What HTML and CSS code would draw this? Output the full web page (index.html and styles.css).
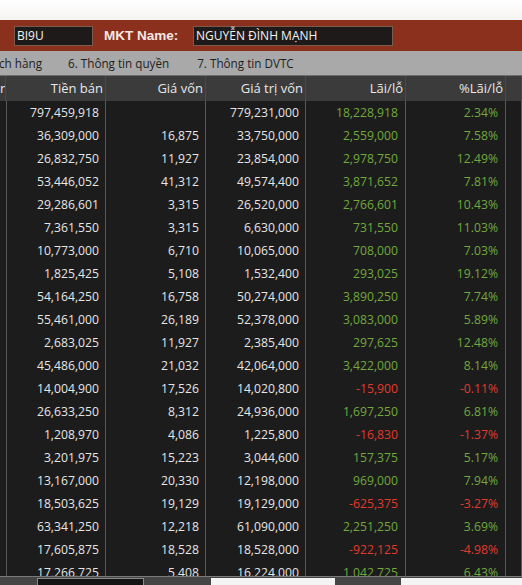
FILE: index.html
```html
<!DOCTYPE html>
<html lang="vi">
<head>
<meta charset="utf-8">
<title>Danh mục</title>
<link rel="stylesheet" href="styles.css">
</head>
<body>
<div class="top-space"></div>
<div class="info-bar">
  <div class="field field-code">BI9U</div>
  <div class="label">MKT Name:</div>
  <div class="field field-name">NGUYỄN ĐÌNH MẠNH</div>
</div>
<div class="tabs">
  <span class="tab tab-first">ch hàng</span>
  <span class="tab">6. Thông tin quyền</span>
  <span class="tab">7. Thông tin DVTC</span>
</div>
<div class="grid-head">
  <div class="hcell">n</div>
  <div class="hcell">Tiền bán</div>
  <div class="hcell">Giá vốn</div>
  <div class="hcell">Giá trị vốn</div>
  <div class="hcell">Lãi/lỗ</div>
  <div class="hcell">%Lãi/lỗ</div>
  <div class="hcell"></div>
</div>
<div class="grid-body">
  <div class="row"><div class="c"></div><div class="c">797,459,918</div><div class="c"></div><div class="c">779,231,000</div><div class="c up">18,228,918</div><div class="c up">2.34%</div><div class="c"></div></div>
  <div class="row"><div class="c"></div><div class="c">36,309,000</div><div class="c">16,875</div><div class="c">33,750,000</div><div class="c up">2,559,000</div><div class="c up">7.58%</div><div class="c"></div></div>
  <div class="row"><div class="c"></div><div class="c">26,832,750</div><div class="c">11,927</div><div class="c">23,854,000</div><div class="c up">2,978,750</div><div class="c up">12.49%</div><div class="c"></div></div>
  <div class="row"><div class="c"></div><div class="c">53,446,052</div><div class="c">41,312</div><div class="c">49,574,400</div><div class="c up">3,871,652</div><div class="c up">7.81%</div><div class="c"></div></div>
  <div class="row"><div class="c"></div><div class="c">29,286,601</div><div class="c">3,315</div><div class="c">26,520,000</div><div class="c up">2,766,601</div><div class="c up">10.43%</div><div class="c"></div></div>
  <div class="row"><div class="c"></div><div class="c">7,361,550</div><div class="c">3,315</div><div class="c">6,630,000</div><div class="c up">731,550</div><div class="c up">11.03%</div><div class="c"></div></div>
  <div class="row"><div class="c"></div><div class="c">10,773,000</div><div class="c">6,710</div><div class="c">10,065,000</div><div class="c up">708,000</div><div class="c up">7.03%</div><div class="c"></div></div>
  <div class="row"><div class="c"></div><div class="c">1,825,425</div><div class="c">5,108</div><div class="c">1,532,400</div><div class="c up">293,025</div><div class="c up">19.12%</div><div class="c"></div></div>
  <div class="row"><div class="c"></div><div class="c">54,164,250</div><div class="c">16,758</div><div class="c">50,274,000</div><div class="c up">3,890,250</div><div class="c up">7.74%</div><div class="c"></div></div>
  <div class="row"><div class="c"></div><div class="c">55,461,000</div><div class="c">26,189</div><div class="c">52,378,000</div><div class="c up">3,083,000</div><div class="c up">5.89%</div><div class="c"></div></div>
  <div class="row"><div class="c"></div><div class="c">2,683,025</div><div class="c">11,927</div><div class="c">2,385,400</div><div class="c up">297,625</div><div class="c up">12.48%</div><div class="c"></div></div>
  <div class="row"><div class="c"></div><div class="c">45,486,000</div><div class="c">21,032</div><div class="c">42,064,000</div><div class="c up">3,422,000</div><div class="c up">8.14%</div><div class="c"></div></div>
  <div class="row"><div class="c"></div><div class="c">14,004,900</div><div class="c">17,526</div><div class="c">14,020,800</div><div class="c down">-15,900</div><div class="c down">-0.11%</div><div class="c"></div></div>
  <div class="row"><div class="c"></div><div class="c">26,633,250</div><div class="c">8,312</div><div class="c">24,936,000</div><div class="c up">1,697,250</div><div class="c up">6.81%</div><div class="c"></div></div>
  <div class="row"><div class="c"></div><div class="c">1,208,970</div><div class="c">4,086</div><div class="c">1,225,800</div><div class="c down">-16,830</div><div class="c down">-1.37%</div><div class="c"></div></div>
  <div class="row"><div class="c"></div><div class="c">3,201,975</div><div class="c">15,223</div><div class="c">3,044,600</div><div class="c up">157,375</div><div class="c up">5.17%</div><div class="c"></div></div>
  <div class="row"><div class="c"></div><div class="c">13,167,000</div><div class="c">20,330</div><div class="c">12,198,000</div><div class="c up">969,000</div><div class="c up">7.94%</div><div class="c"></div></div>
  <div class="row"><div class="c"></div><div class="c">18,503,625</div><div class="c">19,129</div><div class="c">19,129,000</div><div class="c down">-625,375</div><div class="c down">-3.27%</div><div class="c"></div></div>
  <div class="row"><div class="c"></div><div class="c">63,341,250</div><div class="c">12,218</div><div class="c">61,090,000</div><div class="c up">2,251,250</div><div class="c up">3.69%</div><div class="c"></div></div>
  <div class="row"><div class="c"></div><div class="c">17,605,875</div><div class="c">18,528</div><div class="c">18,528,000</div><div class="c down">-922,125</div><div class="c down">-4.98%</div><div class="c"></div></div>
  <div class="row"><div class="c"></div><div class="c">17,266,725</div><div class="c">5,408</div><div class="c">16,224,000</div><div class="c up">1,042,725</div><div class="c up">6.43%</div><div class="c"></div></div>
</div>
<div class="footer">
  <div class="fbox fbox-dark"></div>
  <div class="fbox fbox-light fbox-mid"></div>
  <div class="fbox fbox-light fbox-right"></div>
</div>
</body>
</html>
```
FILE: styles.css
```css
* { box-sizing: border-box; }
html, body { margin: 0; padding: 0; }
body {
  width: 522px;
  height: 585px;
  overflow: hidden;
  background: #1c1c1c;
  font-family: "Open Sans", "Noto Sans", sans-serif;
  display: flex;
  flex-direction: column;
}
.top-space {
  height: 20px;
  flex: none;
  background: linear-gradient(#ffffff, #f6f4f2);
}
.info-bar {
  height: 31px;
  flex: none;
  background: #8a301c;
  display: flex;
  align-items: center;
  padding-left: 14px;
}
.field {
  height: 20px;
  background: #1e1a1a;
  border: 1px solid #7a5a4c;
  color: #f2f2f2;
  font-size: 12px;
  line-height: 18px;
  padding-left: 2px;
  white-space: nowrap;
}
.field-code { width: 79px; }
.field-name { width: 200px; }
.label {
  font-family: "Liberation Sans", Arial, sans-serif;
  font-weight: bold;
  font-size: 13.5px;
  color: #f5e8e4;
  margin-left: 11px;
  width: 89px;
}
.tabs {
  height: 25px;
  flex: none;
  background: #a9a9a9;
  border-bottom: 1px solid #6e6e6e;
  display: flex;
  align-items: center;
  font-size: 11.7px;
  color: #1e1e1e;
  white-space: nowrap;
}
.tab { margin-right: 28px; }
.tab-first { margin-left: -1px; margin-right: 26px; }
.grid-head, .row {
  display: grid;
  grid-template-columns: 6px repeat(5, 100px) 1fr;
}
.grid-head {
  height: 25px;
  flex: none;
  background: #3b3b3b;
  color: #e8e8e8;
  font-size: 13px;
}
.hcell {
  text-align: right;
  padding-right: 2px;
  line-height: 24px;
  overflow: hidden;
  white-space: nowrap;
  border-right: 1px solid #4a4a4a;
}
.hcell:first-child { padding-right: 0; }
.grid-body {
  flex: 1;
  overflow: hidden;
  background: #1c1c1c;
}
.row { height: 23px; }
.c {
  text-align: right;
  padding-right: 6px;
  line-height: 23px;
  font-size: 12.2px;
  color: #e6e6e6;
  border-right: 1px solid #5a5a5a;
  white-space: nowrap;
  overflow: hidden;
}
.c.up { color: #72a83e; padding-right: 7px; }
.c.down { color: #e23a2c; padding-right: 7px; }
.footer {
  height: 9px;
  flex: none;
  background: #454545;
  border-top: 1px solid #7a7a7a;
  display: flex;
  align-items: flex-start;
  padding-top: 1px;
}
.fbox { height: 8px; }
.fbox-dark {
  margin-left: 37px;
  width: 107px;
  background: #141414;
  border: 1px solid #8a8a8a;
  border-bottom: none;
}
.fbox-light { background: #f4f4f4; }
.fbox-mid { margin-left: 67px; width: 124px; }
.fbox-right { margin-left: 66px; flex: 1; }
```
